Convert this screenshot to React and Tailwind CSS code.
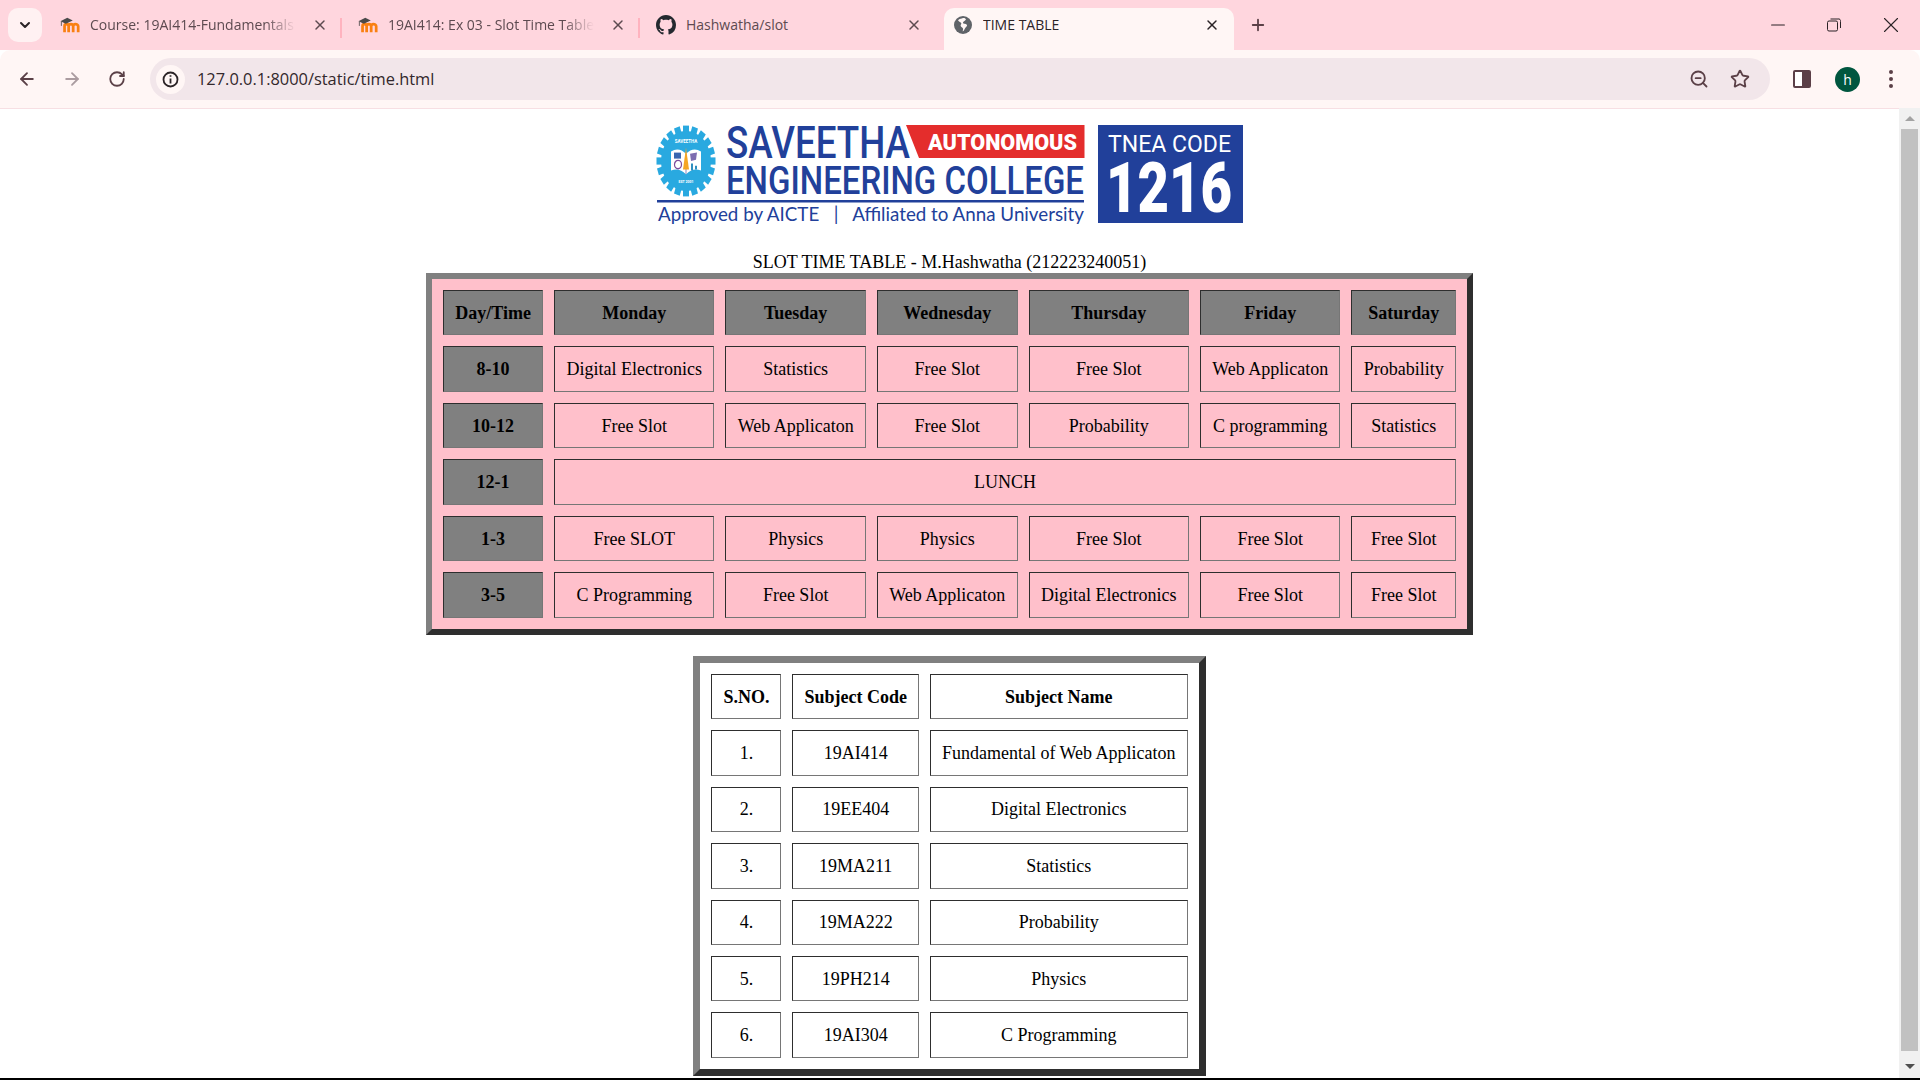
import React from "react";
import { ArrowLeft, ArrowRight, RotateCw, ChevronDown, X, Plus, Star, ZoomOut, Minus } from "lucide-react";

const serif = "font-['Liberation_Serif','Times_New_Roman',serif]";
const ui = "font-['Open_Sans','Noto_Sans',sans-serif]";

function Moodle() {
  return (
    <svg width="22" height="18" viewBox="0 0 22 18">
      <path d="M5 17V10C5 8.500 6 8 7 8S9.500 8.500 9.500 10V17M9.500 10C9.500 8.500 10.800 8 12 8M14.500 17V10.500C14.500 8.800 15.800 8 17 8S20 8.800 20 10.500V17M14.500 10.500C14.500 8.800 13.200 8 12 8" fill="none" stroke="#f98012" strokeWidth="3" />
      <path d="M0.500 5 8 1l6 3-7.500 3.500z" fill="#4a4a4a" />
      <path d="M1.500 5.500V10" stroke="#4a4a4a" strokeWidth="0.900" />
    </svg>
  );
}

function Github() {
  return (
    <svg width="20" height="20" viewBox="0 0 16 16" fill="#24292f">
      <path d="M8 0C3.580 0 0 3.580 0 8c0 3.540 2.290 6.530 5.470 7.590.4.070.550-.170.550-.380 0-.190-.010-.820-.010-1.490-2.010.370-2.530-.490-2.690-.940-.090-.230-.480-.940-.820-1.130-.280-.150-.680-.520-.010-.530.630-.010 1.080.580 1.230.820.720 1.210 1.870.870 2.330.660.070-.520.280-.870.510-1.070-1.780-.2-3.640-.890-3.640-3.950 0-.870.310-1.590.820-2.150-.080-.2-.360-1.020.080-2.120 0 0 .670-.210 2.200.820.640-.180 1.320-.270 2-.270s1.360.090 2 .270c1.530-1.040 2.200-.820 2.200-.820.440 1.100.160 1.920.080 2.120.510.560.820 1.270.820 2.150 0 3.070-1.870 3.750-3.650 3.950.290.250.540.730.540 1.480 0 1.070-.010 1.930-.010 2.200 0 .210.150.460.550.380A8.010 8.010 0 0 0 16 8c0-4.420-3.580-8-8-8z" />
    </svg>
  );
}

function Globe() {
  return (
    <svg width="18" height="18" viewBox="0 0 18 18">
      <circle cx="9" cy="9" r="9" fill="#5f6368" />
      <path d="M9 2c-1.500 1-3.500.6-5 2.200 1 1.800 2.800 1.600 3.300 3 .3 1-1 1.400-.6 2.800.4 1.200 1.800 1.200 2.300 2.400.3 1-.4 2-.2 3 2-1 1.600-3 3.200-4.400.8-.7 1.500-1.600.6-2.600-1-1-2.600-.3-3.400-1.200-.6-.8.4-1.500 1.200-2.200.6-.5 1.300-.9 1.600-1.800C11 1.800 10 1.800 9 2z" fill="#fff6f5" />
    </svg>
  );
}

function Tab({ icon, title, active, fade, size }) {
  return (
    <div className={`relative flex h-[42px] shrink-0 items-center pb-[9px] ${size} ${active ? "rounded-t-[10px] bg-[#fff6f5]" : ""}`}>
      <span className="flex w-[20px] shrink-0 justify-center">{icon}</span>
      <span className={`ml-[10px] mr-[16px] min-w-0 flex-1 overflow-hidden whitespace-nowrap text-[14px] ${ui} ${active ? "text-[#2b2326]" : "text-[#5d4a50]"} ${fade ? "[mask-image:linear-gradient(to_right,#000_85%,transparent)]" : ""}`}>{title}</span>
      <X size={16} strokeWidth={2.2} className={`shrink-0 ${active ? "text-[#2b2326]" : "text-[#5d4a50]"}`} />
    </div>
  );
}

function Chrome() {
  return (
    <header className="shrink-0">
      <div className="flex h-[50px] items-end bg-[#ffd6de]">
        <div className="mb-[8px] ml-[8px] flex h-[34px] w-[34px] shrink-0 items-center justify-center rounded-[10px] bg-[#fff1f2]">
          <ChevronDown size={16} strokeWidth={3} className="text-[#2b2326]" />
        </div>
        <div className="ml-[2px] flex items-end">
          <Tab icon={<Moodle />} title="Course: 19AI414-Fundamentals of Web" fade size="w-[298px] pl-4 pr-[14px]" />
          <div className="mb-[12px] -ml-[2px] h-[20px] w-[2px] bg-[#ffb3bf]" />
          <Tab icon={<Moodle />} title="19AI414: Ex 03 - Slot Time Table Assignment" fade size="w-[298px] pl-4 pr-[14px]" />
          <div className="mb-[12px] -ml-[2px] h-[20px] w-[2px] bg-[#ffb3bf]" />
          <Tab icon={<Github />} title="Hashwatha/slot" size="w-[304px] pl-4 pr-[22px]" />
          <Tab icon={<Globe />} title="TIME TABLE" active size="w-[290px] pl-[9px] pr-[14px]" />
        </div>
        <div className="mb-[8px] ml-[10px] flex h-[34px] w-[28px] items-center justify-center text-[#5b4047]">
          <Plus size={18} strokeWidth={2.4} />
        </div>
        <div className="ml-auto flex h-full items-center text-[#2b2326]">
          <span className="flex w-[56px] justify-center"><Minus size={22} strokeWidth={1.1} /></span>
          <span className="flex w-[56px] justify-center">
            <svg width="14" height="14" viewBox="0 0 14 14" fill="none" stroke="currentColor"><rect x="0.500" y="3" width="10" height="10" rx="1.500" /><path d="M3.500 1H11a2 2 0 0 1 2.500 2.500V10" /></svg>
          </span>
          <span className="flex w-[58px] justify-center"><X size={26} strokeWidth={1} /></span>
        </div>
      </div>
      <div className="-mb-px flex h-[59px] items-center rounded-t-[10px] border-b border-[#f7dfe3] bg-[#fff6f5]">
        <div className="flex w-[150px] shrink-0 items-center pl-[17px] text-[#5b4047]">
          <ArrowLeft size={20} strokeWidth={2.2} />
          <ArrowRight size={20} strokeWidth={2.2} className="ml-[25px] text-[#ab9ca0]" />
          <RotateCw size={18} strokeWidth={2.4} className="ml-[26px]" />
        </div>
        <div className="flex h-[42px] w-[1620px] shrink-0 items-center rounded-full bg-[#f2e6ea]">
          <span className="ml-[6px] flex h-[29px] w-[29px] items-center justify-center rounded-full bg-[#fff6f5]">
            <svg width="17" height="17" viewBox="0 0 17 17" fill="none" stroke="#2b2326" strokeWidth="1.800"><circle cx="8.500" cy="8.500" r="7" /><path d="M8.500 7.500v5M8.500 4.200v1.600" /></svg>
          </span>
          <span className={`ml-[12px] pt-[1px] text-[16.4px] text-[#33282c] ${ui}`}>127.0.0.1:8000/static/time.html</span>
          <span className="ml-auto flex items-center pr-[20px] text-[#5b4047]">
            <ZoomOut size={20} strokeWidth={2.2} />
            <Star size={20} strokeWidth={2.2} className="ml-[21px]" />
          </span>
        </div>
        <div className="flex flex-1 items-center pl-[23px]">
          <span className="flex h-[18px] w-[18px] overflow-hidden rounded-[2px] border-2 border-[#5b3f47]">
            <span className="w-[7px] bg-white" />
            <span className="flex-1 bg-[#5b3f47]" />
          </span>
          <span className={`ml-[24px] flex h-[25px] w-[25px] items-center justify-center rounded-full bg-[#00563f] text-[14px] text-white ${ui}`}>h</span>
          <span className="ml-[29px] flex flex-col gap-[3px]">
            <span className="h-[4px] w-[4px] rounded-full bg-[#5b4047]" />
            <span className="h-[4px] w-[4px] rounded-full bg-[#5b4047]" />
            <span className="h-[4px] w-[4px] rounded-full bg-[#5b4047]" />
          </span>
        </div>
      </div>
    </header>
  );
}

function Gear() {
  const teeth = Array.from({ length: 20 }, (_, i) => (i * 360) / 20);
  return (
    <g transform="translate(30 36) scale(1 1.2)">
      {teeth.map((a) => (
        <rect key={a} x="-3" y="-29.500" width="6" height="7" fill="#29a9e0" transform={`rotate(${a})`} />
      ))}
      <circle r="25" fill="#29a9e0" />
      <path d="M-15-8Q-7-12 0-6 7-12 15-8V8Q7 5 0 11-7 5-15 8z" fill="#fff" />
      <path d="M0-6V11" stroke="#8a8ac0" strokeWidth="1" />
      <rect x="-12" y="-7" width="7" height="5" fill="#3a66b0" />
      <circle cx="-8" cy="3" r="3.500" fill="none" stroke="#7d4d9c" strokeWidth="1.200" />
      <path d="M0-11 3 7H-3z" fill="#f5a623" />
      <path d="M4-6 11-7 10-1 5 0z" fill="#7d6db0" />
      <path d="M5 2h2v6H5zM9 4h2v3H9z" fill="#2f8fbf" />
      <text x="0" y="-15" textAnchor="middle" fill="#fff" fontFamily="Roboto" fontWeight="700" fontSize="4.500">SAVEETHA</text>
      <text x="0" y="18" textAnchor="middle" fill="#fff" fontFamily="Roboto" fontWeight="700" fontSize="3.500">EST 2001</text>
    </g>
  );
}

function Logo() {
  const blue = "#21409a";
  return (
    <div className="flex h-[100px] w-[588px] items-start">
      <svg width="432" height="100" viewBox="0 0 432 100" overflow="visible" className="shrink-0">
        <Gear />
        <text x="70" y="33" fill={blue} fontFamily="Roboto" fontWeight="500" fontSize="45" textLength="184" lengthAdjust="spacingAndGlyphs">SAVEETHA</text>
        <polygon points="250,0 428.500,0 428.500,33 263,33" fill="#e42d2c" />
        <text x="272" y="25" fill="#fff" fontFamily="Roboto" fontWeight="900" fontSize="22" textLength="149" lengthAdjust="spacingAndGlyphs">AUTONOMOUS</text>
        <text x="70" y="69" fill={blue} fontFamily="Roboto" fontWeight="500" fontSize="38" textLength="358" lengthAdjust="spacingAndGlyphs">ENGINEERING COLLEGE</text>
        <rect x="1" y="75" width="427" height="2.500" fill={blue} />
        <text x="2" y="96" fill={blue} fontFamily="Lato" fontSize="19" textLength="426" lengthAdjust="spacingAndGlyphs" style={{ whiteSpace: "pre" }}>Approved by AICTE   |   Affiliated to Anna University</text>
      </svg>
      <div className="ml-[10px] h-[98px] w-[145px] shrink-0 bg-[#21409a]">
        <svg width="145" height="98" viewBox="0 0 145 98" overflow="visible">
          <text x="10" y="27" fill="#fff" fontFamily="Roboto" fontSize="24" textLength="123" lengthAdjust="spacingAndGlyphs">TNEA CODE</text>
          <text x="8" y="87" fill="#fff" fontFamily="Roboto" fontWeight="900" fontSize="70" textLength="126" lengthAdjust="spacingAndGlyphs">1216</text>
        </svg>
      </div>
    </div>
  );
}

const days = ["Day/Time", "Monday", "Tuesday", "Wednesday", "Thursday", "Friday", "Saturday"];
const rows = [
  ["8-10", "Digital Electronics", "Statistics", "Free Slot", "Free Slot", "Web Applicaton", "Probability"],
  ["10-12", "Free Slot", "Web Applicaton", "Free Slot", "Probability", "C programming", "Statistics"],
  ["12-1"],
  ["1-3", "Free SLOT", "Physics", "Physics", "Free Slot", "Free Slot", "Free Slot"],
  ["3-5", "C Programming", "Free Slot", "Web Applicaton", "Digital Electronics", "Free Slot", "Free Slot"],
];
const subjects = [
  ["1.", "19AI414", "Fundamental of Web Applicaton"],
  ["2.", "19EE404", "Digital Electronics"],
  ["3.", "19MA211", "Statistics"],
  ["4.", "19MA222", "Probability"],
  ["5.", "19PH214", "Physics"],
  ["6.", "19AI304", "C Programming"],
];

const cell = "h-[45.4px] border border-[#2e2e2e] border-r-[#767676] border-b-[#767676] px-[11px] py-0 text-center align-middle whitespace-nowrap";

function TimeTable() {
  return (
    <table className="mx-auto mt-[1px] h-[362px] w-[1047px] border-separate border-spacing-[11px] border-[6px] border-t-[#808080] border-l-[#808080] border-r-[#2e2e2e] border-b-[#2e2e2e] bg-[#ffc0cb]">
      <thead>
        <tr>
          {days.map((d) => (
            <th key={d} className={`${cell} bg-[#808080] font-bold`}>{d}</th>
          ))}
        </tr>
      </thead>
      <tbody>
        {rows.map((r) => (
          <tr key={r[0]}>
            <th className={`${cell} bg-[#808080] font-bold`}>{r[0]}</th>
            {r.length === 1 ? (
              <td colSpan={6} className={cell}>LUNCH</td>
            ) : (
              r.slice(1).map((c, i) => <td key={i} className={cell}>{c}</td>)
            )}
          </tr>
        ))}
      </tbody>
    </table>
  );
}

function SubjectTable() {
  return (
    <table className="mx-auto mt-[21px] border-separate border-spacing-[11px] border-[7px] border-t-[#808080] border-l-[#808080] border-r-[#2e2e2e] border-b-[#2e2e2e] bg-white">
      <thead>
        <tr>
          <th className={`${cell} font-bold`}>S.NO.</th>
          <th className={`${cell} font-bold`}>Subject Code</th>
          <th className={`${cell} font-bold`}>Subject Name</th>
        </tr>
      </thead>
      <tbody>
        {subjects.map((s) => (
          <tr key={s[0]}>
            {s.map((c, i) => <td key={i} className={cell}>{c}</td>)}
          </tr>
        ))}
      </tbody>
    </table>
  );
}

function Scrollbar() {
  return (
    <div className="flex w-[21px] shrink-0 flex-col items-center bg-[#f1f1f1]">
      <div className="flex h-[21px] w-full items-center justify-center">
        <div className="h-0 w-0 border-x-[5px] border-b-[5px] border-x-transparent border-b-[#a3a3a3]" />
      </div>
      <div className="h-[922px] w-[17px] bg-[#c1c1c1]" />
      <div className="mt-auto flex h-[24px] w-full items-center justify-center">
        <div className="h-0 w-0 border-x-[5px] border-t-[5px] border-x-transparent border-t-[#505050]" />
      </div>
    </div>
  );
}

export default function App() {
  return (
    <div className="flex h-[1080px] w-[1920px] flex-col overflow-hidden bg-white">
      <Chrome />
      <div className="flex min-h-0 flex-1 border-b-2 border-black">
        <main className={`min-w-0 flex-1 overflow-hidden pt-[17px] text-[18px] leading-[20px] text-black ${serif}`}>
          <div className="flex justify-center"><Logo /></div>
          <p className="mt-[27px] text-center">SLOT TIME TABLE - M.Hashwatha (212223240051)</p>
          <TimeTable />
          <SubjectTable />
        </main>
        <Scrollbar />
      </div>
    </div>
  );
}
